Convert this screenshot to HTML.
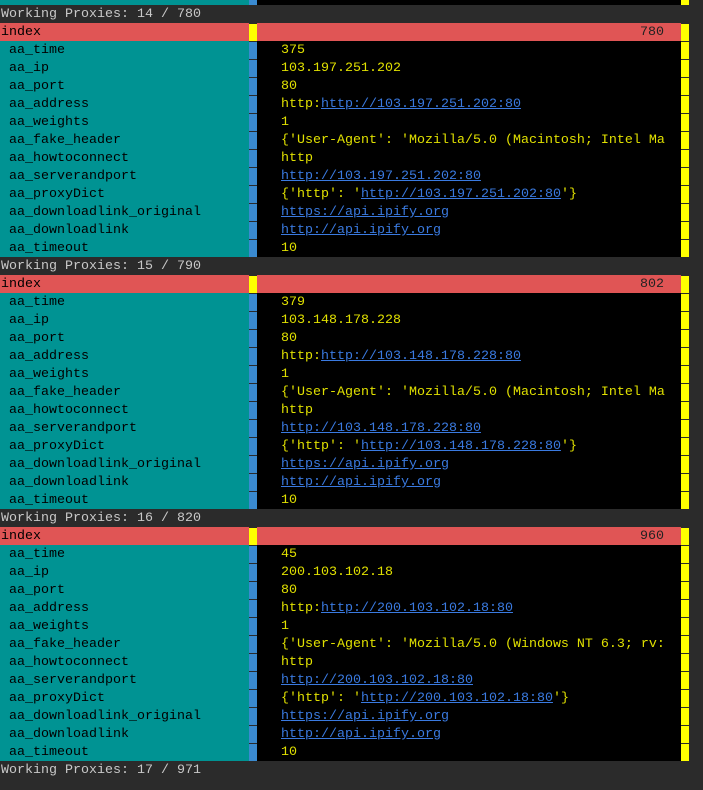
<!DOCTYPE html>
<html><head><meta charset="utf-8"><style>
html,body{margin:0;padding:0;background:#2b2b2b;width:703px;height:790px;overflow:hidden;font-family:"Liberation Mono",monospace;font-size:13.33px;}
.r{position:absolute;left:0;width:689px;height:18px;line-height:20px;white-space:pre;}
.g{color:#c8c8c8;background:#2b2b2b;width:703px;padding-left:1px;box-sizing:border-box}
.l{position:absolute;left:0;top:0;width:249px;height:18px;background:#009393;color:#000;box-sizing:border-box;padding-left:9px}
.m{position:absolute;left:249px;top:1px;width:8px;height:17px;background:#3a8ad0}
.v{position:absolute;left:257px;top:0;width:424px;height:18px;background:#000;color:#e0e000;padding-left:24px;box-sizing:border-box;overflow:hidden}
.y{position:absolute;left:681px;top:1px;width:8px;height:17px;background:#ffff00}
.ix .l{background:#e05555;padding-left:1px}
.ix .v{background:#e05555;color:#222;text-align:right;padding-right:17px}
.ix .m{background:#ffff00}
a{color:#3a7ae0;text-decoration:underline}
</style></head><body>
<div class="r" style="top:-13px"><div class="l"></div><div class="m"></div><div class="v"></div><div class="y"></div></div>

<div class="r g" style="top:5px">Working Proxies: 14 / 780</div>
<div class="r ix" style="top:23px"><div class="l">index</div><div class="m"></div><div class="v">780</div><div class="y"></div></div>
<div class="r" style="top:41px"><div class="l">aa_time</div><div class="m"></div><div class="v">375</div><div class="y"></div></div>
<div class="r" style="top:59px"><div class="l">aa_ip</div><div class="m"></div><div class="v">103.197.251.202</div><div class="y"></div></div>
<div class="r" style="top:77px"><div class="l">aa_port</div><div class="m"></div><div class="v">80</div><div class="y"></div></div>
<div class="r" style="top:95px"><div class="l">aa_address</div><div class="m"></div><div class="v">http:<a>http://103.197.251.202:80</a></div><div class="y"></div></div>
<div class="r" style="top:113px"><div class="l">aa_weights</div><div class="m"></div><div class="v">1</div><div class="y"></div></div>
<div class="r" style="top:131px"><div class="l">aa_fake_header</div><div class="m"></div><div class="v">{'User-Agent': 'Mozilla/5.0 (Macintosh; Intel Ma</div><div class="y"></div></div>
<div class="r" style="top:149px"><div class="l">aa_howtoconnect</div><div class="m"></div><div class="v">http</div><div class="y"></div></div>
<div class="r" style="top:167px"><div class="l">aa_serverandport</div><div class="m"></div><div class="v"><a>http://103.197.251.202:80</a></div><div class="y"></div></div>
<div class="r" style="top:185px"><div class="l">aa_proxyDict</div><div class="m"></div><div class="v">{'http': '<a>http://103.197.251.202:80</a>'}</div><div class="y"></div></div>
<div class="r" style="top:203px"><div class="l">aa_downloadlink_original</div><div class="m"></div><div class="v"><a>https://api.ipify.org</a></div><div class="y"></div></div>
<div class="r" style="top:221px"><div class="l">aa_downloadlink</div><div class="m"></div><div class="v"><a>http://api.ipify.org</a></div><div class="y"></div></div>
<div class="r" style="top:239px"><div class="l">aa_timeout</div><div class="m"></div><div class="v">10</div><div class="y"></div></div>

<div class="r g" style="top:257px">Working Proxies: 15 / 790</div>
<div class="r ix" style="top:275px"><div class="l">index</div><div class="m"></div><div class="v">802</div><div class="y"></div></div>
<div class="r" style="top:293px"><div class="l">aa_time</div><div class="m"></div><div class="v">379</div><div class="y"></div></div>
<div class="r" style="top:311px"><div class="l">aa_ip</div><div class="m"></div><div class="v">103.148.178.228</div><div class="y"></div></div>
<div class="r" style="top:329px"><div class="l">aa_port</div><div class="m"></div><div class="v">80</div><div class="y"></div></div>
<div class="r" style="top:347px"><div class="l">aa_address</div><div class="m"></div><div class="v">http:<a>http://103.148.178.228:80</a></div><div class="y"></div></div>
<div class="r" style="top:365px"><div class="l">aa_weights</div><div class="m"></div><div class="v">1</div><div class="y"></div></div>
<div class="r" style="top:383px"><div class="l">aa_fake_header</div><div class="m"></div><div class="v">{'User-Agent': 'Mozilla/5.0 (Macintosh; Intel Ma</div><div class="y"></div></div>
<div class="r" style="top:401px"><div class="l">aa_howtoconnect</div><div class="m"></div><div class="v">http</div><div class="y"></div></div>
<div class="r" style="top:419px"><div class="l">aa_serverandport</div><div class="m"></div><div class="v"><a>http://103.148.178.228:80</a></div><div class="y"></div></div>
<div class="r" style="top:437px"><div class="l">aa_proxyDict</div><div class="m"></div><div class="v">{'http': '<a>http://103.148.178.228:80</a>'}</div><div class="y"></div></div>
<div class="r" style="top:455px"><div class="l">aa_downloadlink_original</div><div class="m"></div><div class="v"><a>https://api.ipify.org</a></div><div class="y"></div></div>
<div class="r" style="top:473px"><div class="l">aa_downloadlink</div><div class="m"></div><div class="v"><a>http://api.ipify.org</a></div><div class="y"></div></div>
<div class="r" style="top:491px"><div class="l">aa_timeout</div><div class="m"></div><div class="v">10</div><div class="y"></div></div>

<div class="r g" style="top:509px">Working Proxies: 16 / 820</div>
<div class="r ix" style="top:527px"><div class="l">index</div><div class="m"></div><div class="v">960</div><div class="y"></div></div>
<div class="r" style="top:545px"><div class="l">aa_time</div><div class="m"></div><div class="v">45</div><div class="y"></div></div>
<div class="r" style="top:563px"><div class="l">aa_ip</div><div class="m"></div><div class="v">200.103.102.18</div><div class="y"></div></div>
<div class="r" style="top:581px"><div class="l">aa_port</div><div class="m"></div><div class="v">80</div><div class="y"></div></div>
<div class="r" style="top:599px"><div class="l">aa_address</div><div class="m"></div><div class="v">http:<a>http://200.103.102.18:80</a></div><div class="y"></div></div>
<div class="r" style="top:617px"><div class="l">aa_weights</div><div class="m"></div><div class="v">1</div><div class="y"></div></div>
<div class="r" style="top:635px"><div class="l">aa_fake_header</div><div class="m"></div><div class="v">{'User-Agent': 'Mozilla/5.0 (Windows NT 6.3; rv:</div><div class="y"></div></div>
<div class="r" style="top:653px"><div class="l">aa_howtoconnect</div><div class="m"></div><div class="v">http</div><div class="y"></div></div>
<div class="r" style="top:671px"><div class="l">aa_serverandport</div><div class="m"></div><div class="v"><a>http://200.103.102.18:80</a></div><div class="y"></div></div>
<div class="r" style="top:689px"><div class="l">aa_proxyDict</div><div class="m"></div><div class="v">{'http': '<a>http://200.103.102.18:80</a>'}</div><div class="y"></div></div>
<div class="r" style="top:707px"><div class="l">aa_downloadlink_original</div><div class="m"></div><div class="v"><a>https://api.ipify.org</a></div><div class="y"></div></div>
<div class="r" style="top:725px"><div class="l">aa_downloadlink</div><div class="m"></div><div class="v"><a>http://api.ipify.org</a></div><div class="y"></div></div>
<div class="r" style="top:743px"><div class="l">aa_timeout</div><div class="m"></div><div class="v">10</div><div class="y"></div></div>

<div class="r g" style="top:761px">Working Proxies: 17 / 971</div>
</body></html>
